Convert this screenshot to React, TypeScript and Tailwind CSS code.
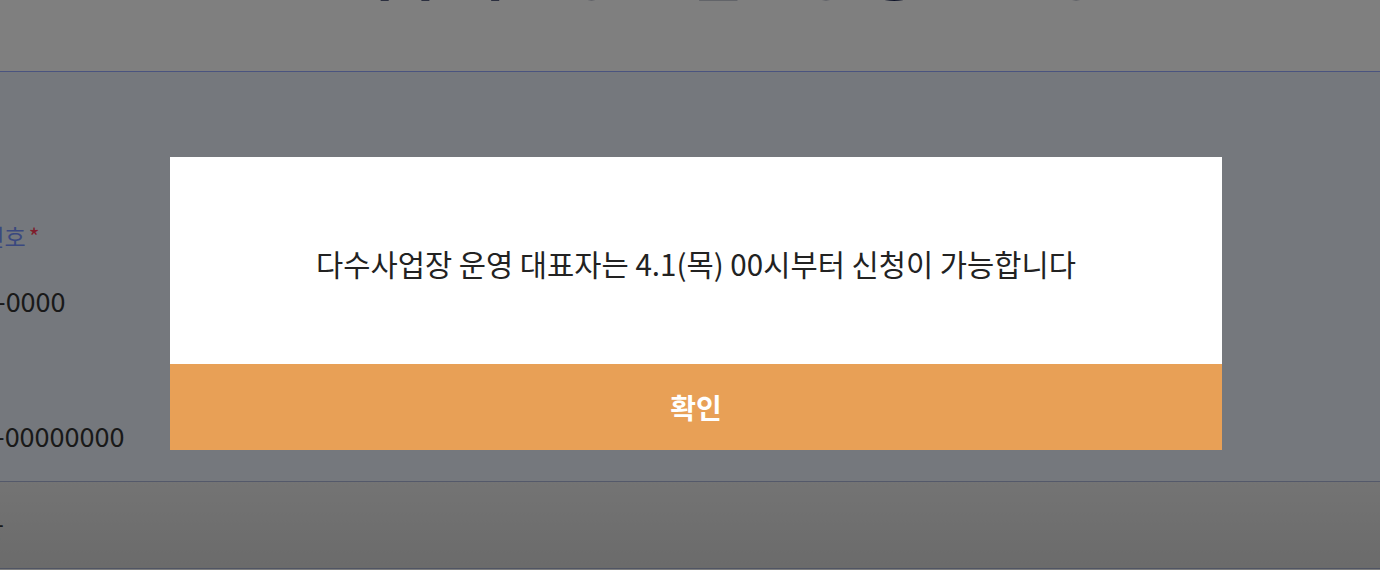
import { useState } from 'react';

const FONT = "font-['Noto_Sans_CJK_KR','Noto_Sans',sans-serif]";

export default function App() {
  const [open, setOpen] = useState(true);

  return (
    <div className={`relative w-[1380px] h-[570px] overflow-hidden bg-white ${FONT}`}>
      {/* page behind the dialog */}
      <header className="h-[72px] overflow-hidden border-b border-[#94a8ff] pl-[64px]">
        <h1 className="-mt-[61px] text-center text-[60px] leading-[60px] font-bold text-[#1b2550] whitespace-nowrap">
          다수사업장 손실보상 통합 신청
        </h1>
      </header>

      <section className="h-[410px] bg-[#eaf0fa] border-b border-[#a8b2d4] overflow-hidden pt-[149px]">
        <div className="-ml-[59px] text-[23px] leading-[30px] text-[#7490ff] whitespace-nowrap">
          전화번호<span className="ml-[3px] text-[#ff3c58]">*</span>
        </div>
        <div className="-ml-[118px] mt-[32px] text-[27px] leading-[36px] text-[#333] whitespace-nowrap">
          010-0000-0000
        </div>
        <div className="-ml-[119px] mt-[99px] text-[27px] leading-[36px] text-[#333] whitespace-nowrap">
          1002-345-00000000
        </div>
      </section>

      <section className="h-[87px] bg-gradient-to-b from-[#e8e8e8] to-[#d6d6d6] border-b border-[#a0aac8] overflow-hidden pt-[30px]">
        <div className="-ml-[116px] text-[26px] leading-[36px] text-[#333] whitespace-nowrap">다수사업장</div>
      </section>

      {open && (
        <>
          <div className="absolute inset-0 bg-black/50" />
          <div className="absolute left-[170px] top-[157px] w-[1052px] bg-white">
            <div className="h-[207px] flex items-center justify-center pt-[6px]">
              <p className="text-[29.6px] leading-[38px] text-[#222]">
                다수사업장 운영 대표자는 4.1(목) 00시부터 신청이 가능합니다
              </p>
            </div>
            <button
              onClick={() => setOpen(false)}
              className="w-full h-[86px] bg-[#e8a056] text-white text-[28px] font-bold flex items-center justify-center"
            >
              확인
            </button>
          </div>
        </>
      )}
    </div>
  );
}
